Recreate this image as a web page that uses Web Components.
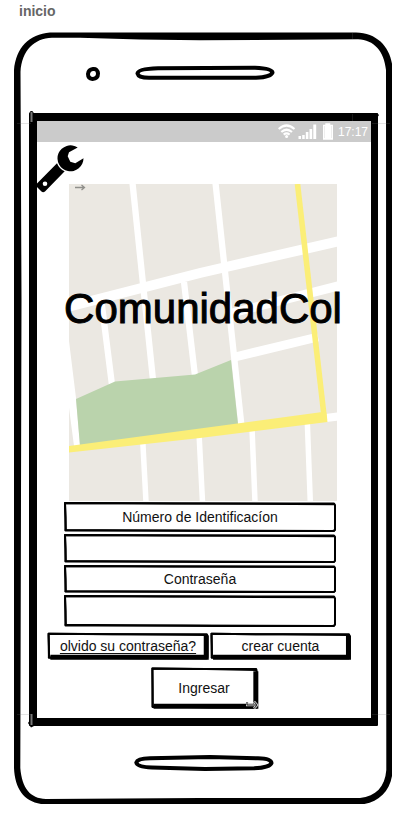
<!DOCTYPE html>
<html lang="es">
<head>
<meta charset="utf-8">
<meta name="viewport" content="width=device-width, initial-scale=1">
<title>inicio</title>
<style>
body { margin: 0; background: #fff; color: #111; font: 14px/20px "Liberation Sans", Arial, sans-serif; }
</style>
</head>
<body>
<start-page></start-page>
<script>
function define(name, html) {
  const template = document.createElement('template');
  template.innerHTML = html;
  customElements.define(name, class extends HTMLElement {
    constructor() {
      super();
      this.attachShadow({ mode: 'open' }).append(template.content.cloneNode(true));
    }
  });
}

/* Hand-drawn rectangle that stretches round its content */
define('sketch-box', `
<style>
:host { display: grid; position: relative; background: #fff; }
svg { position: absolute; inset: 0; width: 100%; height: 100%; pointer-events: none; overflow: visible; }
path { fill: none; stroke: #000; stroke-linejoin: round; stroke-linecap: round; vector-effect: non-scaling-stroke; stroke-width: 2; }
.shade { display: none; stroke-width: 5; stroke-linejoin: miter; stroke-linecap: butt; }
:host([raised]) .shade { display: block; }
</style>
<slot></slot>
<svg viewBox="0 0 272 30" preserveAspectRatio="none" aria-hidden="true">
<path class="edge" d="M1 1L110 1.500L270 1.500L271 3L271 28L269 29L120 28.500L1.500 28.500L1.500 15Z"/>
<path d="M1 1L140 1.500L270 2.200M1.500 28L150 29L270 29M1 2L1.800 28"/>
<path class="shade" d="M269 3L269 28L4 28"/>
</svg>`);

define('wire-button', `
<style>
:host { display: block; }
sketch-box { height: 100%; }
button { appearance: none; border: 0; margin: 0; padding: 0; background: none; color: inherit; font: inherit; cursor: pointer; }
</style>
<sketch-box raised><button type="button"><slot></slot></button></sketch-box>`);

define('wire-link', `
<style>
:host { display: block; }
sketch-box { height: 100%; }
a { display: grid; place-items: center; color: inherit; text-underline-offset: 2px; white-space: nowrap; }
</style>
<sketch-box raised><a href="#recuperar"><slot></slot></a></sketch-box>`);

define('login-fields', `
<style>
:host { display: grid; grid-template-rows: 30px 29px 28px 32px; gap: 2px; }
label { display: grid; place-items: center; }
input { min-width: 0; box-sizing: border-box; border: 0; margin: 0; padding: 0 10px; background: none; font: inherit; outline-offset: -4px; }
</style>
<sketch-box><label for="numero">Número de Identificacíon</label></sketch-box>
<sketch-box><input id="numero" type="text" autocomplete="username"></sketch-box>
<sketch-box><label for="clave">Contraseña</label></sketch-box>
<sketch-box><input id="clave" type="password" autocomplete="current-password"></sketch-box>`);

define('status-bar', `
<style>
:host { display: flex; align-items: center; justify-content: flex-end; height: 21px; padding-right: 3px; background: #cbcbcb; color: #fff; font-size: 12px; line-height: 20px; }
svg { display: block; margin-right: 4px; }
</style>
<svg width="56" height="19" viewBox="279 122 56 19" aria-hidden="true">
<g fill="none" stroke="#fff" stroke-width="2.2"><path d="M279.7 129Q287.500 122 295.500 129"/><path d="M282.300 132Q287.500 127.500 293 132"/><path d="M284.700 134.600Q287.500 132.300 290.600 134.600"/></g>
<circle cx="287.600" cy="136.400" r="1.500" fill="#fff"/>
<path fill="#fff" d="M299.500 136h2.500v3h-2.500zM303.200 135h2.500v4h-2.500zM306.800 132h2.600v7h-2.600zM310.500 129h2.700v10h-2.700zM314.300 124.500h2.900v14.500h-2.900zM326.300 123.200h5v1.500h2.700v15h-10v-15h2.300z"/>
<path d="M325.500 126v12M332.500 126v12" stroke="#e2e2e2" stroke-width=".6"/>
</svg><span>17:17</span>`);

define('city-map', `
<style>
:host { display: grid; grid-template-columns: minmax(0, 1fr); height: 317px; align-items: center; justify-items: center; }
svg, ::slotted(*) { grid-area: 1 / 1; }
svg { width: 100%; height: 317px; display: block; }
</style>
<svg viewBox="69 184 268 317" preserveAspectRatio="none" aria-hidden="true">
<path fill="#ebe8e2" d="M69 184h268v317h-268z"/>
<g fill="none" stroke="#fff" stroke-width="6.300">
<path d="M132.500 183L153 380M215.500 183L241.500 426M184 282L195 376M101 298L112 385"/>
<path stroke-width="5.500" d="M142.700 440L146 502M199 433L202.500 502M252 428L255 502M307.300 422L310.300 502"/>
<path stroke-width="10" d="M60 309L200 273L340 241"/>
<path stroke-width="9" d="M232 313L340 285.500M235 357L318 337"/>
<path stroke-width="8" d="M326 418L338 416.500"/>
</g>
<path fill="#fff" d="M64 300L68.500 337L76 398L80 446L74 446L68 400L60 340Z"/>
<path fill="#bad3ac" d="M76 399L115 381.500L195 374.500L231 360L238 424L200 430L80 446Z"/>
<path stroke="#fbee77" stroke-width="5.600" d="M297.500 184L324.500 420"/>
<path fill="#fbee77" d="M69 446L200 428.500L326 411.500L327.500 422L200 438L69 452.500Z"/>
<path d="M75 187.500h9M81.500 185l3 2.500l-3 2.500" fill="none" stroke="#8f8f8b" stroke-width="1.300"/>
</svg>
<slot></slot>`);

define('wrench-icon', `
<style>
:host { display: block; width: 48px; height: 48px; }
svg { display: block; }
</style>
<svg width="48" height="48" viewBox="36 145 48 48" aria-hidden="true">
<path d="M77.700 147.500A13 13 0 1 0 83.500 158.300L75.300 163.300L70.300 161.700L67.700 156.300L69 152.300Z"/>
<path fill-rule="evenodd" d="M57 163.300Q59.300 169 64.700 171.300L45 191.500Q43 193 41.500 191.500L36.500 186.500Q35.500 185 37 183.500ZM47.300 183.700a2.300 2.300 0 1 0-4.600 0a2.300 2.300 0 1 0 4.600 0Z"/>
</svg>`);

define('phone-frame', `
<style>
:host { display: block; position: relative; }
svg { display: block; width: 100%; }
.head { height: 81px; }
.foot { height: 78px; }
.case { position: absolute; inset: 0; height: 100%; pointer-events: none; }
.screen { margin: 0 14px 0 15px; border: 8px solid #000; border-right-width: 7px; border-radius: 1px; }
.line { fill: none; stroke: #000; stroke-width: 4; stroke-linejoin: round; }
</style>
<svg class="head" viewBox="14 32 378 81" preserveAspectRatio="none" aria-hidden="true">
<path class="line" d="M93 69Q97.500 68.500 98 73.500Q98 78.500 92.500 79Q88 78.500 88 74Q88.500 69.500 93 69Z"/>
<path class="line" d="M158 68.300L255 67.800Q272 68.500 272.500 72.500Q271 77 256 77.800L150 77.800Q138.500 78 137.500 73.500Q138 68.800 158 68.300Z"/>
</svg>
<div class="screen"><slot></slot></div>
<svg class="foot" viewBox="14 726 378 78" preserveAspectRatio="none" aria-hidden="true">
<path class="line" d="M150 758.300L210 757L258 758.300Q271 758.500 271.500 763Q270 767.500 254 768.300L205 769L152 767.500Q137 767 136.300 762.500Q137.500 758.500 150 758.300Z"/>
</svg>
<svg class="case" viewBox="14 32 378 772" preserveAspectRatio="none" aria-hidden="true">
<path fill-rule="evenodd" d="M50 32.500L356 32.500C378 33 391 48 392.500 68L392.500 772C391 792 377 804.500 358 804.500L46 804.500C25 803.500 15 790 14 768L14 70C16 48 29 34 50 32.500ZM52 37.700C34 38.500 22 50 20.500 72L21.500 300L20.300 768C22 788 30 798.500 46 799L200 798L360 798C376 796 385 787 386.300 770L386 70C384 51 374 40 358 39.300L200 40.200L140 39.500L80 37.700Z"/>
<path d="M29 116Q29 111 31.500 111Q34 111 34 116ZM374 113H377L379 115L377 118ZM28 723L30 720L34 726L31 727.500Z"/>
<path d="M31.500 112V122M31.500 714V725" stroke="#777" stroke-width="2"/>
<path d="M17 123.500h14M17 714.500h14M372 123.500h18M372 714.500h18M352.500 32v7M352.500 114v7" stroke="#777" stroke-opacity=".4" stroke-width=".5"/>
</svg>`);

define('start-page', `
<style>
:host { display: block; padding: 1px 21px 20px 14px; }
h2 { margin: 0; padding: 0 0 11px 5px; color: #666; font-size: 14px; line-height: 20px; }
main { position: relative; padding: 42px 0 9px; }
wrench-icon { position: absolute; left: -1px; top: 3px; }
city-map { margin: 0 34px 0 32px; }
h1 { margin: 0; padding-bottom: 68px; font-size: 42px; line-height: 48px; font-weight: 400; color: #000; -webkit-text-stroke: 1px #000; white-space: nowrap; }
login-fields { margin: 1px 35px 0 27px; }
.options { display: grid; grid-template-columns: 160fr 139fr; gap: 3px; height: 26px; margin: 6px 21px 8px 11px; }
.enter { position: relative; width: 105px; height: 42px; margin: 0 auto; }
.enter wire-button { height: 100%; }
.enter svg { position: absolute; right: -2px; bottom: -1px; }
</style>
<h2>inicio</h2>
<phone-frame>
<status-bar></status-bar>
<main>
<wrench-icon></wrench-icon>
<city-map><h1>ComunidadCol</h1></city-map>
<login-fields></login-fields>
<div class="options"><wire-link>olvido su contraseña?</wire-link><wire-button>crear cuenta</wire-button></div>
<div class="enter"><wire-button>Ingresar</wire-button>
<svg width="13" height="10" viewBox="0 0 13 10" aria-hidden="true"><path d="M1 2v3h9M8 1.500l3 3.500l-3 3.500" fill="none" stroke="#ccc" stroke-width="2.600"/><path d="M1 2v3h9M8 1.500l3 3.500l-3 3.500" fill="none" stroke="#222" stroke-width="1"/></svg></div>
</main>
</phone-frame>`);
</script>
</body>
</html>
